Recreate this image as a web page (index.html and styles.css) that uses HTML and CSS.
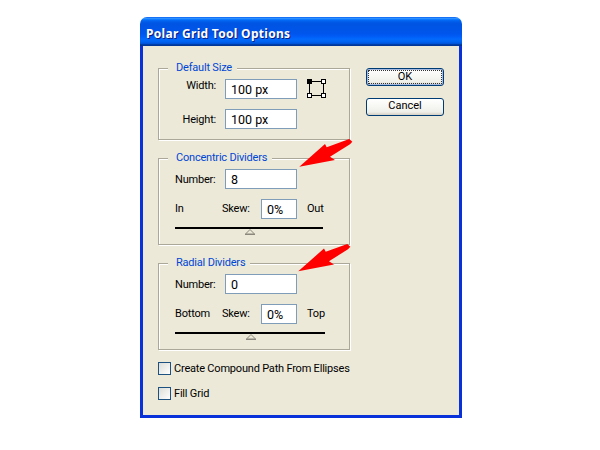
FILE: index.html
```html
<!DOCTYPE html>
<html>
<head>
<meta charset="utf-8">
<title>Polar Grid Tool Options</title>
<link rel="stylesheet" href="styles.css">
</head>
<body>
<div class="dialog">
  <div class="titlebar">Polar Grid Tool Options</div>
  <div class="client">
    <div class="col-main">
      <section class="group group-size">
        <div class="legend">Default Size</div>
        <div class="size-grid">
          <label class="size-label size-label-up">Width:</label>
          <div class="input input-wide">100 px</div>
          <svg class="link-icon" width="19" height="19" viewBox="0 0 19 19">
            <rect x="2.5" y="2.5" width="14" height="14" fill="none" stroke="#000"/>
            <rect x="0.5" y="0.5" width="4" height="4" fill="#000" stroke="#000"/>
            <rect x="14.5" y="0.5" width="4" height="4" fill="#fff" stroke="#000"/>
            <rect x="0.5" y="14.5" width="4" height="4" fill="#fff" stroke="#000"/>
            <rect x="14.5" y="14.5" width="4" height="4" fill="#fff" stroke="#000"/>
          </svg>
          <label class="size-label">Height:</label>
          <div class="input input-wide">100 px</div>
        </div>
      </section>
      <section class="group group-divider">
        <div class="legend">Concentric Dividers</div>
        <div class="number-row"><span class="number-label">Number:</span><div class="input input-wide">8</div></div>
        <div class="skew-row"><span class="end-label">In</span><span class="skew-label">Skew:</span><div class="input input-small">0%</div><span class="out-label">Out</span></div>
        <div class="slider slider-a"><svg class="thumb" width="10" height="6" viewBox="0 0 10 6"><path d="M0.5 5 L5 0.5 L9.5 5 Z" fill="#ece9d8" stroke="#8a877c"/><path d="M0 5.5 H10" stroke="#8a877c"/></svg></div>
      </section>
      <section class="group group-divider">
        <div class="legend">Radial Dividers</div>
        <div class="number-row"><span class="number-label">Number:</span><div class="input input-wide">0</div></div>
        <div class="skew-row"><span class="end-label">Bottom</span><span class="skew-label">Skew:</span><div class="input input-small">0%</div><span class="out-label">Top</span></div>
        <div class="slider slider-b"><svg class="thumb" width="10" height="6" viewBox="0 0 10 6"><path d="M0.5 5 L5 0.5 L9.5 5 Z" fill="#ece9d8" stroke="#8a877c"/><path d="M0 5.5 H10" stroke="#8a877c"/></svg></div>
      </section>
      <div class="checks">
        <label class="check"><span class="box"></span>Create Compound Path From Ellipses</label>
        <label class="check"><span class="box"></span>Fill Grid</label>
      </div>
    </div>
    <div class="col-buttons">
      <button class="btn btn-default"><span class="focus">OK</span></button>
      <button class="btn"><span class="nofocus">Cancel</span></button>
    </div>
  </div>
</div>
<svg class="arrows" width="600" height="450" viewBox="0 0 600 450">
  <path d="M299.3 166.7 L325 144 L326.7 147.3 L349.3 139 L352.3 141.7 L350 144.3 L330 156.7 L335 160 Z" fill="#f00"/>
  <path d="M298.3 271.2 L324 248.5 L325.7 251.8 L347.3 244 L350.3 246.7 L348 249.3 L329 261.2 L334 264.5 Z" fill="#f00"/>
</svg>
</body>
</html>
```
FILE: styles.css
```css
* { box-sizing: border-box; }
html, body { margin: 0; background: #fff; }
body {
  position: relative;
  width: 600px;
  height: 450px;
  overflow: hidden;
  padding: 17px 0 0 140px;
  font-family: Roboto, "Liberation Sans", sans-serif;
  font-size: 11px;
  letter-spacing: -0.2px;
  color: #000;
}
.dialog { width: 322px; height: 401px; display: flex; flex-direction: column; }
.titlebar {
  height: 29px;
  padding: 9px 0 0 6px;
  line-height: 15px;
  border-radius: 7px 7px 0 0;
  color: #fff;
  font-family: "Noto Sans", sans-serif;
  font-weight: bold;
  font-size: 12px;
  letter-spacing: 0.3px;
  text-shadow: 1px 1px 0 #0f1f80;
  background: linear-gradient(to bottom, #0058ee 0%, #3593ff 4%, #288eff 6%, #127dff 8%, #036ffc 10%, #0262ee 14%, #0057e5 20%, #0054e3 24%, #0055eb 56%, #005bf5 66%, #026afe 76%, #0062ef 86%, #0052d6 92%, #0040ab 94%, #003092 100%);
}
.client {
  flex: 1;
  display: flex;
  align-items: flex-start;
  gap: 16px;
  padding: 22px 0 0 15px;
  background: #ece9d8;
  border: solid #0831d9;
  border-width: 0 3px 3px;
}
.col-main { width: 192px; display: flex; flex-direction: column; gap: 18px; }
.col-buttons { width: 78px; display: flex; flex-direction: column; gap: 12px; }
.group {
  border: 1px solid #aca899;
  box-shadow: 1px 1px 0 #fff, inset 1px 1px 0 #fff;
  padding-left: 16px;
}
.group-size { height: 72px; }
.group-divider { height: 87px; }
.legend {
  width: fit-content;
  height: 14px;
  margin: -8px 0 0 -7px;
  padding: 0 5px 0 8px;
  background: #ece9d8;
  color: #0046d5;
  line-height: 14px;
}
.input {
  height: 20px;
  border: 1px solid #7f9db9;
  background: #fff;
  padding-left: 5px;
  line-height: 19px;
  font-size: 12.5px;
  letter-spacing: 0;
}
.input-wide { width: 72px; }
.input-small { width: 36px; }
.size-grid {
  display: grid;
  grid-template-columns: 41px 72px 19px;
  column-gap: 9px;
  row-gap: 10px;
  margin-top: 4px;
  align-items: center;
}
.size-label { text-align: right; }
.size-label-up { align-self: start; }
.link-icon { align-self: start; margin-left: 1px; display: block; }
.number-row { display: flex; align-items: center; margin-top: 4px; }
.number-label { width: 50px; }
.skew-row { display: flex; align-items: center; margin-top: 10px; }
.end-label { width: 47px; padding-bottom: 2px; }
.skew-label { width: 39px; padding-bottom: 2px; }
.out-label { margin-left: 10px; padding-bottom: 2px; }
.slider { border-top: 2px solid #000; margin-top: 8px; }
.slider-a { width: 148px; }
.slider-b { width: 150px; }
.thumb { display: block; margin-top: 0; }
.slider-a .thumb { margin-left: 70px; }
.slider-b .thumb { margin-left: 71px; }
.checks { display: flex; flex-direction: column; gap: 12px; margin-top: -6px; }
.check { display: flex; align-items: center; height: 13px; gap: 3px; white-space: nowrap; }
.box {
  flex: none;
  width: 13px;
  height: 13px;
  border: 1px solid #1c5180;
  background: linear-gradient(135deg, #dcdcd7, #fff);
}
.btn {
  display: block;
  width: 78px;
  height: 18px;
  padding: 1px;
  border: 1px solid #003c74;
  border-radius: 3px;
  background: linear-gradient(to bottom, #fff, #f0f0ea 80%, #d6d0c5);
  font: inherit;
  letter-spacing: 0;
  color: #000;
}
.btn-default { box-shadow: inset 0 0 0 1px #a6b9e0; }
.focus, .nofocus { display: block; height: 14px; line-height: 12px; }
.focus { border: 1px dotted #333; }
.arrows { position: absolute; left: 0; top: 0; pointer-events: none; }
```
